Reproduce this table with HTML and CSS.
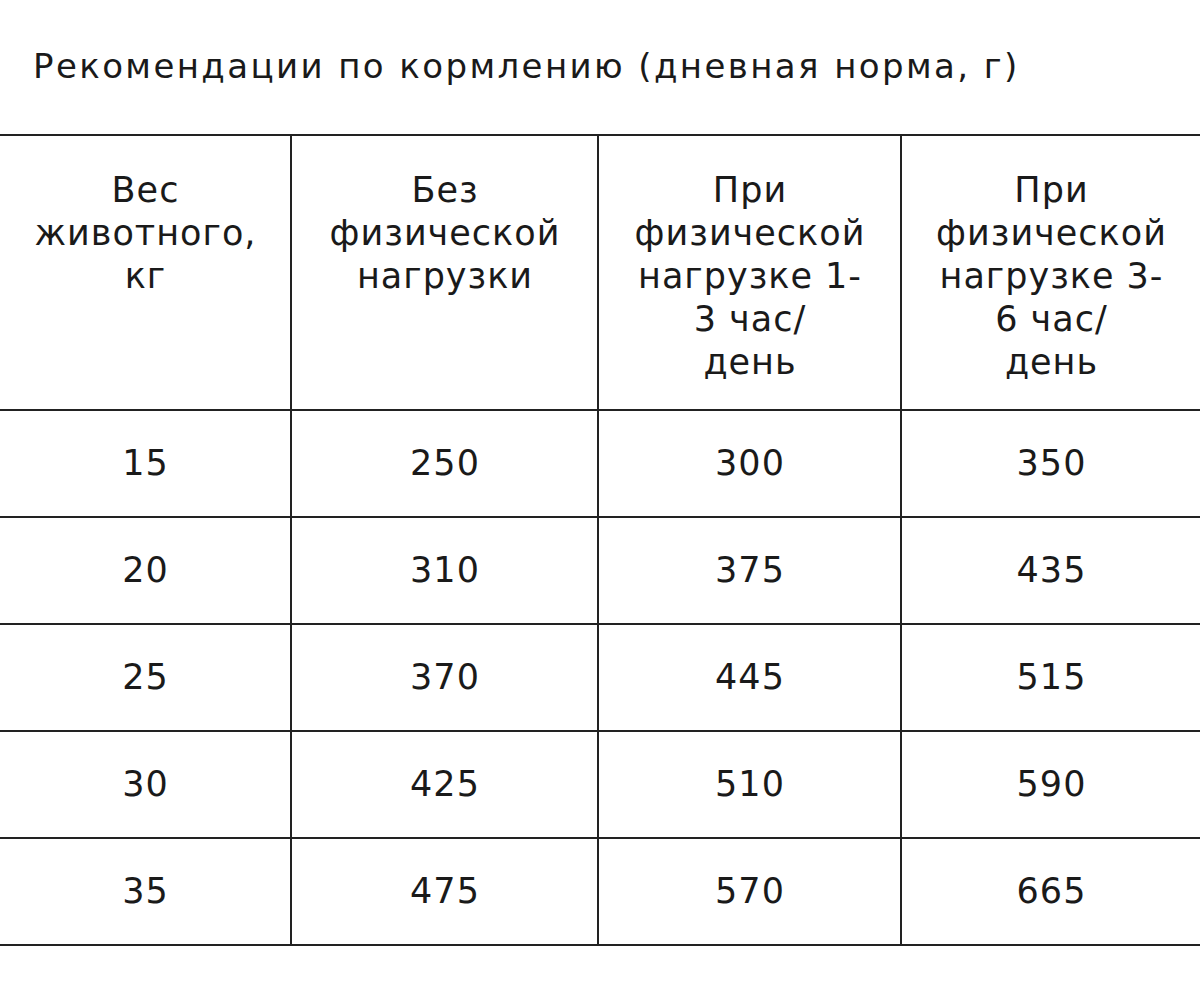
FILE: index.html
```html
<!DOCTYPE html>
<html lang="ru">
<head>
<meta charset="utf-8">
<title>Рекомендации по кормлению</title>
<link rel="stylesheet" href="styles.css">
</head>
<body>
<div class="page">
  <h2 class="title">Рекомендации по кормлению (дневная норма, г)</h2>
  <table class="feed">
    <colgroup>
      <col class="c1"><col class="c2"><col class="c3"><col class="c4">
    </colgroup>
    <thead>
      <tr>
        <th>Вес<br>животного,<br>кг</th>
        <th>Без<br>физической<br>нагрузки</th>
        <th>При<br>физической<br>нагрузке 1-<br>3 час/<br>день</th>
        <th>При<br>физической<br>нагрузке 3-<br>6 час/<br>день</th>
      </tr>
    </thead>
    <tbody>
      <tr><td>15</td><td>250</td><td>300</td><td>350</td></tr>
      <tr><td>20</td><td>310</td><td>375</td><td>435</td></tr>
      <tr><td>25</td><td>370</td><td>445</td><td>515</td></tr>
      <tr><td>30</td><td>425</td><td>510</td><td>590</td></tr>
      <tr><td>35</td><td>475</td><td>570</td><td>665</td></tr>
    </tbody>
  </table>
</div>
</body>
</html>
```
FILE: styles.css
```css
html, body {
  margin: 0;
  padding: 0;
  background: #ffffff;
}
.page {
  width: 1200px;
  font-family: "DejaVu Sans", "Inter", sans-serif;
  color: #1a1a1a;
}
.title {
  margin: 0;
  padding: 46px 0 0 33px;
  height: 88px;
  box-sizing: border-box;
  font-size: 34px;
  font-weight: 400;
  line-height: 40px;
  letter-spacing: 2.4px;
  white-space: nowrap;
}
.feed {
  width: 1200px;
  border-collapse: collapse;
  table-layout: fixed;
  margin-top: 46px;
}
.c1 { width: 291px; }
.c2 { width: 307px; }
.c3 { width: 303px; }
.c4 { width: 299px; }
.feed th, .feed td {
  border: 2px solid #222;
  text-align: center;
  font-size: 35px;
  font-weight: 400;
  line-height: 43px;
  letter-spacing: 1px;
  padding: 0 0 0 1px;
}
.feed th:first-child, .feed td:first-child { border-left: none; }
.feed th:last-child, .feed td:last-child { border-right: none; }
.feed th {
  height: 275px;
  vertical-align: top;
  padding-top: 33px;
  box-sizing: border-box;
}
.feed td {
  height: 105px;
  vertical-align: middle;
}
```
